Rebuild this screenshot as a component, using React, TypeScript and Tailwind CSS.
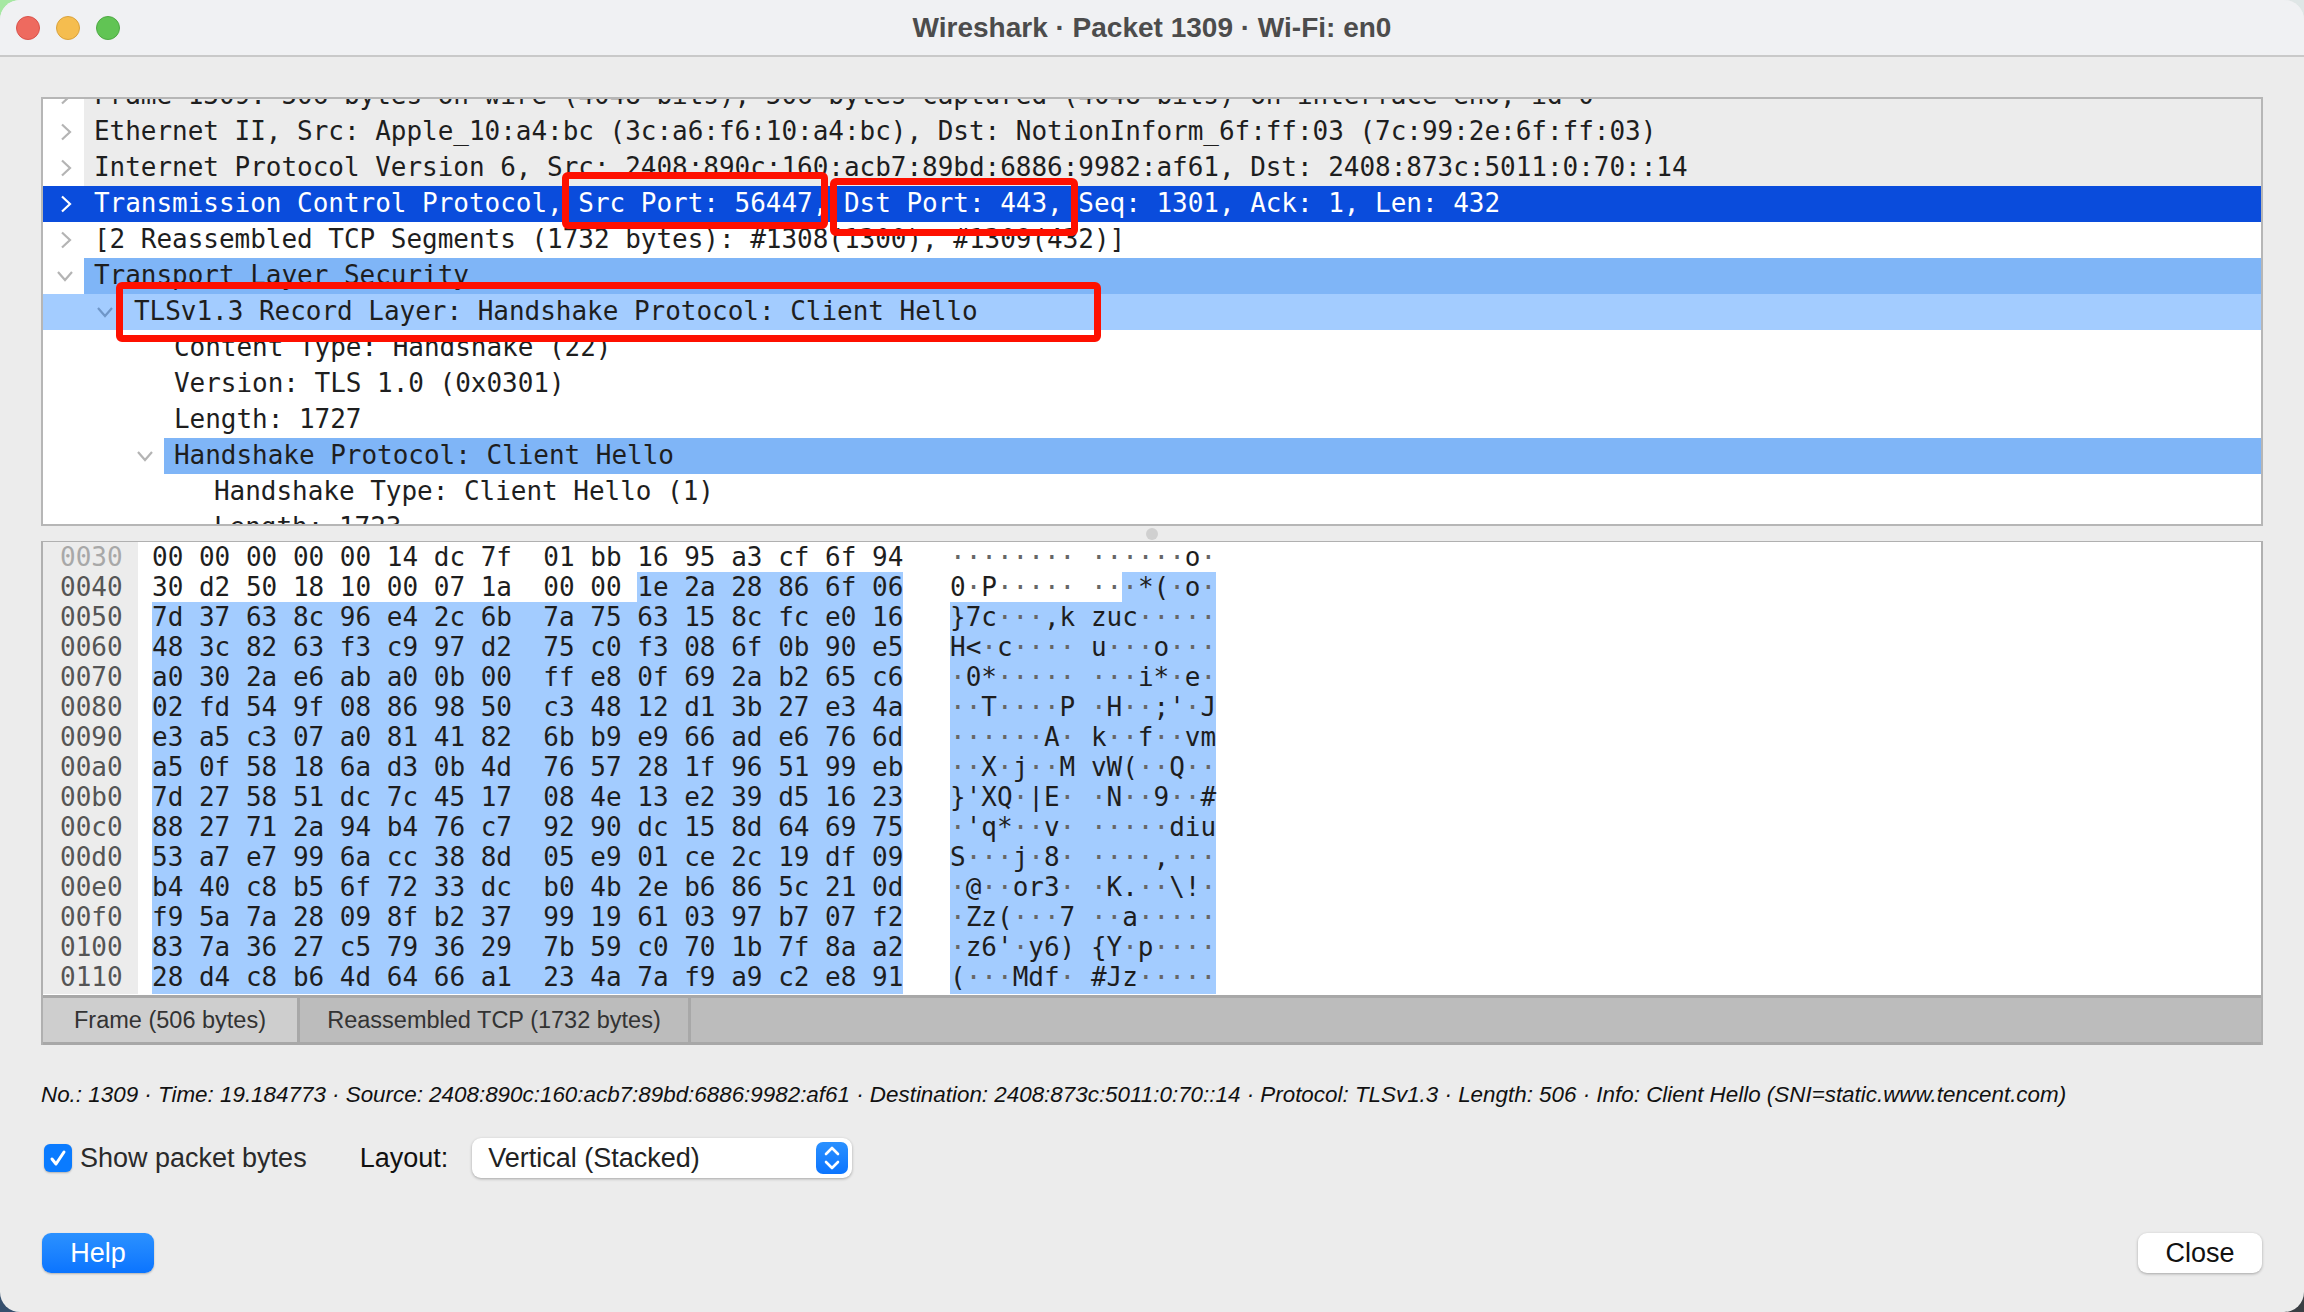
const HEX_ROWS = [
	["0030", "00 00 00 00 00 14 dc 7f 01 bb 16 95 a3 cf 6f 94", 16],
	["0040", "30 d2 50 18 10 00 07 1a 00 00 1e 2a 28 86 6f 06", 10],
	["0050", "7d 37 63 8c 96 e4 2c 6b 7a 75 63 15 8c fc e0 16", 0],
	["0060", "48 3c 82 63 f3 c9 97 d2 75 c0 f3 08 6f 0b 90 e5", 0],
	["0070", "a0 30 2a e6 ab a0 0b 00 ff e8 0f 69 2a b2 65 c6", 0],
	["0080", "02 fd 54 9f 08 86 98 50 c3 48 12 d1 3b 27 e3 4a", 0],
	["0090", "e3 a5 c3 07 a0 81 41 82 6b b9 e9 66 ad e6 76 6d", 0],
	["00a0", "a5 0f 58 18 6a d3 0b 4d 76 57 28 1f 96 51 99 eb", 0],
	["00b0", "7d 27 58 51 dc 7c 45 17 08 4e 13 e2 39 d5 16 23", 0],
	["00c0", "88 27 71 2a 94 b4 76 c7 92 90 dc 15 8d 64 69 75", 0],
	["00d0", "53 a7 e7 99 6a cc 38 8d 05 e9 01 ce 2c 19 df 09", 0],
	["00e0", "b4 40 c8 b5 6f 72 33 dc b0 4b 2e b6 86 5c 21 0d", 0],
	["00f0", "f9 5a 7a 28 09 8f b2 37 99 19 61 03 97 b7 07 f2", 0],
	["0100", "83 7a 36 27 c5 79 36 29 7b 59 c0 70 1b 7f 8a a2", 0],
	["0110", "28 d4 c8 b6 4d 64 66 a1 23 4a 7a f9 a9 c2 e8 91", 0],
] as const;

const MONO = "font-['DejaVu_Sans_Mono',monospace] text-[26px] whitespace-pre";

function Chevron({ open, color }: { open?: boolean; color: string }) {
	if (open) {
		return (
			<svg width="18" height="12" viewBox="0 0 18 12" fill="none" stroke={color} strokeWidth="2.2">
				<path d="M2 2l7 8 7-8" />
			</svg>
		);
	}
	return (
		<svg width="12" height="18" viewBox="0 0 12 18" fill="none" stroke={color} strokeWidth="2.2" className="mr-0.5">
			<path d="M2 1.5l8 7.5-8 7.5" />
		</svg>
	);
}

interface TreeRowProps {
	text: string;
	depth?: number;
	arrow?: "right" | "down";
	arrowColor?: string;
	rowBg?: string;
	textBg?: string;
	textColor?: string;
}

function TreeRow({
	text,
	depth = 0,
	arrow,
	arrowColor = "#b4b4b4",
	rowBg = "bg-white",
	textBg = "",
	textColor = "text-[#1e1e1e]",
}: TreeRowProps) {
	return (
		<div className={`flex h-9 shrink-0 ${rowBg}`}>
			<div style={{ width: 41 + depth * 40 }} className="flex shrink-0 items-center justify-end pr-[10px]">
				{arrow && <Chevron open={arrow === "down"} color={arrowColor} />}
			</div>
			<div className={`grow pl-[10px] leading-[35px] tracking-[-0.03px] ${MONO} ${textBg} ${textColor}`}>{text}</div>
		</div>
	);
}

function AsciiText({ text }: { text: string }) {
	return (
		<>
			{text.split(/(·+)/).map((part, i) =>
				part.startsWith("·") ? (
					<span key={i} className="text-[#666666]">
						{part}
					</span>
				) : (
					part
				)
			)}
		</>
	);
}

function HexRow({ offset, hex, start, last }: { offset: string; hex: string; start: number; last: boolean }) {
	const bytes = hex.split(" ");
	const hexText = bytes.slice(0, 8).join(" ") + "  " + bytes.slice(8).join(" ");
	const ascii = bytes
		.map((b) => {
			const code = parseInt(b, 16);
			return code >= 0x20 && code < 0x7f ? String.fromCharCode(code) : "·";
		})
		.join("");
	const asciiText = ascii.slice(0, 8) + " " + ascii.slice(8);
	const hexCut = start === 16 ? 48 : start === 0 ? 0 : start * 3 + 1;
	const asciiCut = start === 16 ? 17 : start === 0 ? 0 : start + 1;
	const sel = last ? "h-8" : "h-[30px]";

	return (
		<div className={`flex ${sel} leading-[30px] ${MONO} text-[#1e1e1e]`}>
			<div className={`w-[95px] shrink-0 bg-[#ececec] pl-[17px] ${offset === "0030" ? "text-[#a8a8a8]" : "text-[#555555]"}`}>
				{offset}
			</div>
			<div className="w-[14px] shrink-0" />
			<div className="flex w-[751px] shrink-0">
				<span className={sel}>{hexText.slice(0, hexCut)}</span>
				<span className={`${sel} grow-0 bg-[#a3ccff]`}>{hexText.slice(hexCut)}</span>
			</div>
			<div className="w-[47px] shrink-0" />
			<div className="flex">
				<span className={sel}>
					<AsciiText text={asciiText.slice(0, asciiCut)} />
				</span>
				<span className={`${sel} bg-[#a3ccff]`}>
					<AsciiText text={asciiText.slice(asciiCut)} />
				</span>
			</div>
		</div>
	);
}

function RedBox({ className }: { className: string }) {
	return <div className={`pointer-events-none absolute rounded-[6px] border-[7px] border-[#fe1000] ${className}`} />;
}

export default function App() {
	return (
		<div className="relative h-[1312px] w-[2304px] overflow-hidden bg-[#dfe6e6] font-['Liberation_Sans',sans-serif]">
			<div className="absolute top-0 left-0 h-6 w-6 bg-[#a6e8a2]" />
			<div className="absolute bottom-0 left-0 h-6 w-6 bg-[#36506e]" />
			<div className="absolute right-0 bottom-0 h-6 w-6 bg-[#3a3f44]" />

			<div className="relative flex h-full w-full flex-col overflow-hidden rounded-[20px] bg-[#ececec]">
				<header className="relative flex h-[57px] shrink-0 items-center justify-center border-b-2 border-[#c9c9c9] bg-[#f0f1f3]">
					<div className="absolute top-4 left-4 flex gap-4">
						<span className="h-6 w-6 rounded-full border border-[#d9534c] bg-[#ee6a5f]" />
						<span className="h-6 w-6 rounded-full border border-[#d9a23c] bg-[#f5bd4f]" />
						<span className="h-6 w-6 rounded-full border border-[#4ea944] bg-[#61c454]" />
					</div>
					<h1 className="text-[28px] font-bold text-[#4c4c4c]">Wireshark · Packet 1309 · Wi-Fi: en0</h1>
				</header>

				<main className="flex grow flex-col px-[41px] pt-10">
					<section className="flex h-[429px] shrink-0 flex-col overflow-hidden border-2 border-[#b6b6b6] bg-white">
						<div className="-mt-[21px]">
							<TreeRow
								text="Frame 1309: 506 bytes on wire (4048 bits), 506 bytes captured (4048 bits) on interface en0, id 0"
								arrow="right"
								textBg="bg-[#ececec]"
							/>
							<TreeRow
								text="Ethernet II, Src: Apple_10:a4:bc (3c:a6:f6:10:a4:bc), Dst: NotionInform_6f:ff:03 (7c:99:2e:6f:ff:03)"
								arrow="right"
								textBg="bg-[#ececec]"
							/>
							<TreeRow
								text="Internet Protocol Version 6, Src: 2408:890c:160:acb7:89bd:6886:9982:af61, Dst: 2408:873c:5011:0:70::14"
								arrow="right"
								textBg="bg-[#ececec]"
							/>
							<TreeRow
								text="Transmission Control Protocol, Src Port: 56447, Dst Port: 443, Seq: 1301, Ack: 1, Len: 432"
								arrow="right"
								arrowColor="#ffffff"
								rowBg="bg-[#0a4cdc]"
								textColor="text-white"
							/>
							<TreeRow text="[2 Reassembled TCP Segments (1732 bytes): #1308(1300), #1309(432)]" arrow="right" />
							<TreeRow text="Transport Layer Security" arrow="down" textBg="bg-[#7fb5f7]" />
							<TreeRow
								text="TLSv1.3 Record Layer: Handshake Protocol: Client Hello"
								depth={1}
								arrow="down"
								arrowColor="#6f96c8"
								rowBg="bg-[#a3ccff]"
							/>
							<TreeRow text="Content Type: Handshake (22)" depth={2} />
							<TreeRow text="Version: TLS 1.0 (0x0301)" depth={2} />
							<TreeRow text="Length: 1727" depth={2} />
							<TreeRow text="Handshake Protocol: Client Hello" depth={2} arrow="down" textBg="bg-[#7fb5f7]" />
							<TreeRow text="Handshake Type: Client Hello (1)" depth={3} />
							<TreeRow text="Length: 1723" depth={3} />
						</div>
					</section>

					<div className="flex h-[15px] shrink-0 items-center justify-center bg-[#ececec]">
						<span className="h-3 w-3 rounded-full bg-[#d0d0d0]" />
					</div>

					<section className="h-[504px] shrink-0 border-x-2 border-t border-[#b0b0b0]">
						<div className="h-[453px] bg-white">
							{HEX_ROWS.map(([offset, hex, start], i) => (
								<HexRow key={offset} offset={offset} hex={hex} start={start} last={i === HEX_ROWS.length - 1} />
							))}
						</div>
						<div className="flex h-[50px] border-y-[3px] border-[#a8a8a8] bg-[#bcbcbc] pt-0 text-[23.5px] text-[#333333]">
							<div className="flex w-[257px] items-center justify-center border-r-[3px] border-[#a8a8a8] bg-[#cecece] pt-0.5">
								Frame (506 bytes)
							</div>
							<div className="flex w-[391px] items-center justify-center border-r-[3px] border-[#a8a8a8] pt-0.5">
								Reassembled TCP (1732 bytes)
							</div>
						</div>
					</section>

					<p className="mt-[35px] h-[30px] text-[22.4px] leading-[30px] whitespace-nowrap text-[#111111] italic">
						No.: 1309 · Time: 19.184773 · Source: 2408:890c:160:acb7:89bd:6886:9982:af61 · Destination: 2408:873c:5011:0:70::14 · Protocol: TLSv1.3 · Length: 506 · Info: Client Hello (SNI=static.www.tencent.com)
					</p>

					<div className="mt-[28px] flex h-10 items-center text-[27px]">
						<span className="ml-[3px] flex h-7 w-7 items-center justify-center rounded-[6px] bg-[#0a7bff] shadow-[0_1px_2px_rgba(0,0,0,0.25)]">
							<svg width="20" height="20" viewBox="0 0 20 20" fill="none" stroke="#ffffff" strokeWidth="3" strokeLinecap="round" strokeLinejoin="round">
								<path d="M4 11l4 5 8-12" />
							</svg>
						</span>
						<span className="ml-2 text-[#2a2a2a]">Show packet bytes</span>
						<span className="ml-[53px] text-[#111111]">Layout:</span>
						<div className="ml-6 flex h-10 w-[380px] items-center justify-between rounded-[9px] bg-white pr-1 pl-4 shadow-[0_1px_3px_rgba(0,0,0,0.3)]">
							<span className="text-[#222222]">Vertical (Stacked)</span>
							<span className="flex h-8 w-8 items-center justify-center rounded-[7px] bg-gradient-to-b from-[#2b91ff] to-[#0a74ff]">
								<svg width="18" height="26" viewBox="0 0 18 26" fill="none" stroke="#ffffff" strokeWidth="2.6" strokeLinecap="round" strokeLinejoin="round">
									<path d="M3 9l6-6 6 6M3 17l6 6 6-6" />
								</svg>
							</span>
						</div>
					</div>

					<div className="mt-[55px] flex items-center justify-between text-[27px]">
						<button className="ml-px h-10 w-28 rounded-[9px] bg-gradient-to-b from-[#2b91ff] to-[#0a74ff] text-white shadow-[0_1px_2px_rgba(0,0,0,0.25)]">
							Help
						</button>
						<button className="mr-px h-10 w-[124px] rounded-[9px] bg-white text-[#111111] shadow-[0_1px_3px_rgba(0,0,0,0.3)]">
							Close
						</button>
					</div>
				</main>
			</div>

			<RedBox className="top-[172px] left-[562px] h-[57px] w-[266px]" />
			<RedBox className="top-[178px] left-[830px] h-[58px] w-[248px]" />
			<RedBox className="top-[282px] left-[116px] h-[60px] w-[985px]" />
		</div>
	);
}
